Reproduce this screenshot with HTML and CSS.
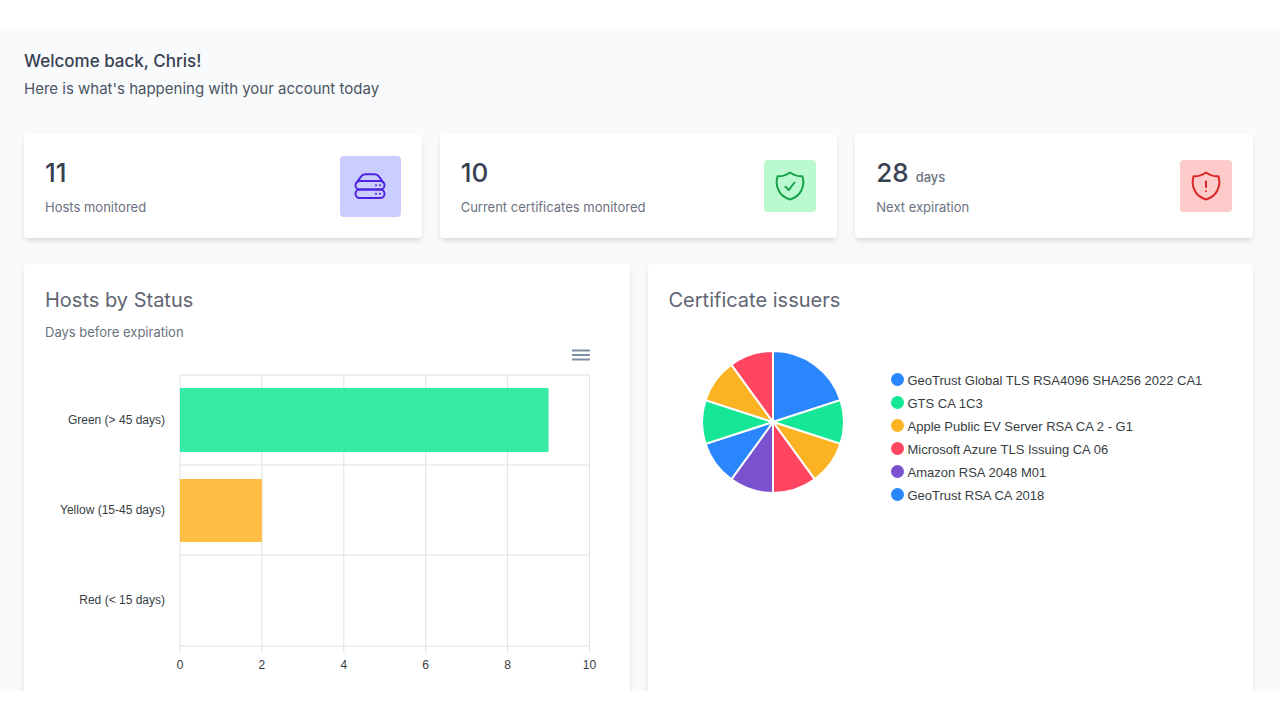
FILE: index.html
```html
<!DOCTYPE html>
<html lang="en">
<head>
<meta charset="utf-8">
<title>Dashboard</title>
<link rel="stylesheet" href="styles.css">
</head>
<body>
<main class="dashboard">
  <header class="welcome">
    <h1 class="welcome-title">Welcome back, Chris!</h1>
    <p class="welcome-text">Here is what's happening with your account today</p>
  </header>

  <section class="stats">
    <article class="card stat">
      <div>
        <p class="stat-value">11</p>
        <p class="stat-label">Hosts monitored</p>
      </div>
      <div class="stat-icon stat-icon-hosts">
        <svg width="32" height="28" viewBox="0 0 32 28" fill="none" stroke="currentColor" stroke-width="2" stroke-linecap="round" stroke-linejoin="round">
          <rect x="1.5" y="9" width="29" height="8.500" rx="4.200"/>
          <rect x="1.500" y="17.500" width="29" height="8.500" rx="4.200"/>
          <path d="M2.700 10.700 7 4.600Q8.500 2.300 11.200 2.300H20.800Q23.500 2.300 25 4.600L29.300 10.700"/>
          <path d="M22 13.300h.01M26 13.300h.01M22 21.800h.01M26 21.800h.01"/>
        </svg>
      </div>
    </article>
    <article class="card stat">
      <div>
        <p class="stat-value">10</p>
        <p class="stat-label">Current certificates monitored</p>
      </div>
      <div class="stat-icon stat-icon-valid">
        <svg width="30" height="30" viewBox="0 0 30 30" fill="none" stroke="currentColor" stroke-width="2" stroke-linecap="round" stroke-linejoin="round">
          <path d="M15 1.500Q9.500 5.500 2.600 5.300C-.3 14.500 3.500 25 15 28.500C26.500 25 30.300 14.500 27.400 5.300Q20.500 5.500 15 1.500Z"/>
          <path d="M10.500 15.700 13.800 19 19.500 11.500"/>
        </svg>
      </div>
    </article>
    <article class="card stat">
      <div>
        <p class="stat-value">28 <span class="stat-unit">days</span></p>
        <p class="stat-label">Next expiration</p>
      </div>
      <div class="stat-icon stat-icon-expiring">
        <svg width="30" height="30" viewBox="0 0 30 30" fill="none" stroke="currentColor" stroke-width="2" stroke-linecap="round" stroke-linejoin="round">
          <path d="M15 1.500Q9.500 5.500 2.600 5.300C-.3 14.500 3.500 25 15 28.500C26.500 25 30.300 14.500 27.400 5.300Q20.500 5.500 15 1.500Z"/>
          <path d="M15 10.500V16M15 20.200v.01"/>
        </svg>
      </div>
    </article>
  </section>

  <section class="panels">
    <article class="card panel">
      <h2 class="panel-title">Hosts by Status</h2>
      <p class="panel-subtitle">Days before expiration</p>
      <div class="bar-chart">
        <button class="chart-menu" type="button" aria-label="Chart menu">
          <svg width="18" height="12" viewBox="0 0 18 12" fill="none" stroke="currentColor" stroke-width="2">
            <path d="M0 1.500H18M0 6H18M0 10.500H18"/>
          </svg>
        </button>
        <div class="bar-labels">
          <span>Green (&gt; 45 days)</span>
          <span>Yellow (15-45 days)</span>
          <span>Red (&lt; 15 days)</span>
        </div>
        <svg class="plot" width="100%" height="300">
          <g class="grid-lines">
            <line x1="0" y1="0" x2="100%" y2="0"/>
            <line x1="0" y1="90" x2="100%" y2="90"/>
            <line x1="0" y1="180" x2="100%" y2="180"/>
            <line x1="0" y1="271" x2="100%" y2="271"/>
            <line x1="0" y1="0" x2="0" y2="278"/>
            <line x1="20%" y1="0" x2="20%" y2="278"/>
            <line x1="40%" y1="0" x2="40%" y2="278"/>
            <line x1="60%" y1="0" x2="60%" y2="278"/>
            <line x1="80%" y1="0" x2="80%" y2="278"/>
            <line x1="100%" y1="0" x2="100%" y2="278"/>
          </g>
          <rect class="bar bar-green" x="0" y="13" width="90%" height="64"/>
          <rect class="bar bar-yellow" x="0" y="104" width="20%" height="63"/>
          <g class="tick-labels">
            <text x="0" y="294">0</text>
            <text x="20%" y="294">2</text>
            <text x="40%" y="294">4</text>
            <text x="60%" y="294">6</text>
            <text x="80%" y="294">8</text>
            <text x="100%" y="294">10</text>
          </g>
        </svg>
      </div>
    </article>

    <article class="card panel">
      <h2 class="panel-title">Certificate issuers</h2>
      <div class="pie-chart">
        <svg class="pie" width="144" height="144" viewBox="-72 -72 144 144">
          <path class="blue" d="M0 0V-71A71 71 0 0 1 67.5-21.900Z"/>
          <path class="green" d="M0 0 67.500-21.900A71 71 0 0 1 67.500 21.900Z"/>
          <path class="amber" d="M0 0 67.500 21.900A71 71 0 0 1 41.700 57.400Z"/>
          <path class="red" d="M0 0 41.700 57.400A71 71 0 0 1 0 71Z"/>
          <path class="purple" d="M0 0V71A71 71 0 0 1-41.700 57.400Z"/>
          <path class="blue" d="M0 0-41.700 57.400A71 71 0 0 1-67.500 21.900Z"/>
          <path class="green" d="M0 0-67.500 21.900A71 71 0 0 1-67.500-21.900Z"/>
          <path class="amber" d="M0 0-67.500-21.900A71 71 0 0 1-41.700-57.400Z"/>
          <path class="red" d="M0 0-41.700-57.400A71 71 0 0 1 0-71Z"/>
        </svg>
        <ul class="legend">
          <li><svg class="dot blue" width="13" height="13"><circle cx="6.500" cy="6.500" r="6.500"/></svg>GeoTrust Global TLS RSA4096 SHA256 2022 CA1</li>
          <li><svg class="dot green" width="13" height="13"><circle cx="6.500" cy="6.500" r="6.500"/></svg>GTS CA 1C3</li>
          <li><svg class="dot amber" width="13" height="13"><circle cx="6.500" cy="6.500" r="6.500"/></svg>Apple Public EV Server RSA CA 2 - G1</li>
          <li><svg class="dot red" width="13" height="13"><circle cx="6.500" cy="6.500" r="6.500"/></svg>Microsoft Azure TLS Issuing CA 06</li>
          <li><svg class="dot purple" width="13" height="13"><circle cx="6.500" cy="6.500" r="6.500"/></svg>Amazon RSA 2048 M01</li>
          <li><svg class="dot blue" width="13" height="13"><circle cx="6.500" cy="6.500" r="6.500"/></svg>GeoTrust RSA CA 2018</li>
        </ul>
      </div>
    </article>
  </section>
</main>
</body>
</html>
```
FILE: styles.css
```css
* { box-sizing: border-box; }

body {
  margin: 0;
  min-height: 100vh;
  padding: 29px 0;
  display: flex;
  flex-direction: column;
  background: #fff;
  color: #374151;
  font-family: Inter, "Liberation Sans", sans-serif;
}

h1, h2, p, ul { margin: 0; padding: 0; }

.dashboard {
  flex: 1;
  display: flex;
  flex-direction: column;
  padding: 20px 27px 0 24px;
  background: #f9fafc;
  overflow: hidden;
}

.welcome { padding-bottom: 33px; }

.welcome-title {
  font-size: 17px;
  line-height: 25px;
  font-weight: 500;
}

.welcome-text {
  padding-top: 3px;
  font-size: 15px;
  line-height: 24px;
  color: #4b5563;
}

.card {
  background: #fff;
  border-radius: 4px;
  padding: 21px;
  box-shadow: 0 4px 6px -1px rgba(0, 0, 0, 0.1), 0 2px 4px -1px rgba(0, 0, 0, 0.06);
}

.stats {
  display: grid;
  grid-template-columns: repeat(3, 1fr);
  gap: 18px;
}

.stat {
  display: flex;
  align-items: center;
  justify-content: space-between;
  min-height: 104px;
}

.stat-value {
  font-size: 26px;
  line-height: 36px;
  font-weight: 500;
}

.stat-unit {
  font-size: 13px;
  line-height: 13px;
  color: #6b7280;
}

.stat-label {
  padding-top: 6px;
  font-size: 13px;
  line-height: 20px;
  color: #6b7280;
}

.stat-icon {
  display: flex;
  align-items: center;
  justify-content: center;
  width: 52px;
  height: 52px;
  border-radius: 4px;
}

.stat-icon-hosts { width: 61px; height: 61px; background: #c9cefe; color: #4f22e0; }
.stat-icon-valid { background: #bbf9d0; color: #16a34a; }
.stat-icon-expiring { background: #fecaca; color: #dc2626; }

.panels {
  flex: 1;
  display: grid;
  grid-template-columns: repeat(2, 1fr);
  gap: 18px;
  padding-top: 26px;
}

.panel {
  border-radius: 4px 4px 0 0;
  padding-bottom: 0;
}

.panel-title {
  font-size: 20px;
  line-height: 30px;
  font-weight: 400;
  color: #5f6673;
}

.panel-subtitle {
  padding-top: 7px;
  font-size: 13px;
  line-height: 20px;
  color: #6b7280;
}

.bar-chart {
  display: grid;
  grid-template-columns: 135px 1fr;
  padding: 7px 19px 0 0;
  font-family: "Liberation Sans", Arial, sans-serif;
  font-size: 12px;
}

.chart-menu {
  grid-column: 2;
  justify-self: end;
  height: 26px;
  padding: 0 0 14px;
  border: 0;
  background: none;
  color: #7c8fa6;
  cursor: pointer;
}

.chart-menu svg { display: block; }

.bar-labels {
  grid-column: 1;
  height: 270px;
  display: grid;
  grid-template-rows: repeat(3, 1fr);
  align-items: center;
  padding-right: 15px;
  text-align: right;
  color: #373d3f;
}

.plot { overflow: visible; }
.grid-lines { stroke: #e0e0e0; }
.bar { fill-opacity: 0.85; }
.bar-green { fill: #14e794; }
.bar-yellow { fill: #fcb322; }
.tick-labels { fill: #373d3f; text-anchor: middle; }

.pie-chart {
  display: flex;
  align-items: flex-start;
  padding: 35px 0 0 32px;
}

.pie { stroke: #fff; stroke-width: 2; }
.blue { fill: #2a86fd; }
.green { fill: #15e796; }
.amber { fill: #fbb324; }
.red { fill: #ff4560; }
.purple { fill: #7a51cf; }

.legend {
  list-style: none;
  padding: 19px 0 0 46px;
  font-family: "Liberation Sans", Arial, sans-serif;
  font-size: 13px;
  line-height: 23px;
  color: #373d3f;
}

.legend li {
  display: flex;
  align-items: flex-start;
  gap: 4px;
}

.dot { margin-top: 4px; }
```
